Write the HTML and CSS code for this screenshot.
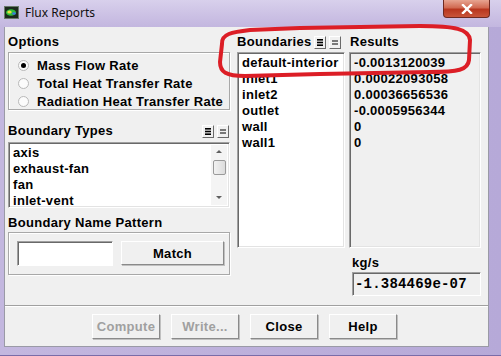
FILE: index.html
```html
<!DOCTYPE html>
<html lang="en">
<head>
  <meta charset="UTF-8">
  <title>Flux Reports</title>
  <link rel="stylesheet" href="styles.css">
</head>
<body>

  <div class="window">

    <!-- Title bar -->
    <div class="titlebar">
      <svg class="app-icon" width="15" height="13" viewBox="0 0 15 13">
        <rect x="0.5" y="0.5" width="14" height="12" fill="#1c2a1c" stroke="#6a7a6a"/>
        <ellipse cx="7" cy="6.5" rx="5" ry="3.2" fill="#2fbf3a"/>
        <ellipse cx="5.5" cy="6" rx="2.2" ry="1.6" fill="#e8e040"/>
        <ellipse cx="10" cy="7.5" rx="1.8" ry="1.3" fill="#3a7ae0"/>
      </svg>
      <span class="title">Flux Reports</span>
      <div class="close-btn">
        <svg width="12" height="10" viewBox="0 0 12 10">
          <path d="M2 1 L10 9 M10 1 L2 9" stroke="#fff" stroke-width="2.4" stroke-linecap="square"/>
        </svg>
      </div>
    </div>

    <div class="frame">
      <div class="client">

        <div class="main">
          <!-- Left column -->
          <div class="left">
            <div class="label">Options</div>
            <div class="group options">
              <div class="radio-row"><span class="radio checked"></span>Mass Flow Rate</div>
              <div class="radio-row"><span class="radio"></span>Total Heat Transfer Rate</div>
              <div class="radio-row"><span class="radio"></span>Radiation Heat Transfer Rate</div>
            </div>

            <div class="label-row types-head">
              <span class="label">Boundary Types</span>
              <span class="tools">
                <span class="tool"><svg width="8" height="9" viewBox="0 0 8 9"><rect x="1" y="1" width="6" height="1.6" fill="#000"/><rect x="1" y="3.7" width="6" height="1.6" fill="#000"/><rect x="1" y="6.4" width="6" height="1.6" fill="#000"/></svg></span>
                <span class="tool"><svg width="8" height="9" viewBox="0 0 8 9"><rect x="1" y="2.5" width="6" height="1" fill="#000"/><rect x="1" y="5.5" width="6" height="1" fill="#000"/></svg></span>
              </span>
            </div>
            <div class="listbox types">
              <div class="items">
                <div class="item">axis</div>
                <div class="item">exhaust-fan</div>
                <div class="item">fan</div>
                <div class="item">inlet-vent</div>
              </div>
              <div class="scrollbar">
                <span class="arrow up"></span>
                <span class="thumb"></span>
                <span class="arrow down"></span>
              </div>
            </div>

            <div class="label pattern-label">Boundary Name Pattern</div>
            <div class="group pattern">
              <div class="field"></div>
              <div class="btn match">Match</div>
            </div>
          </div>

          <!-- Right column -->
          <div class="right">
            <div class="heads">
              <div class="label-row">
                <span class="label">Boundaries</span>
                <span class="tools">
                  <span class="tool"><svg width="8" height="9" viewBox="0 0 8 9"><rect x="1" y="1" width="6" height="1.6" fill="#000"/><rect x="1" y="3.7" width="6" height="1.6" fill="#000"/><rect x="1" y="6.4" width="6" height="1.6" fill="#000"/></svg></span>
                  <span class="tool"><svg width="8" height="9" viewBox="0 0 8 9"><rect x="1" y="2.5" width="6" height="1" fill="#000"/><rect x="1" y="5.5" width="6" height="1" fill="#000"/></svg></span>
                </span>
              </div>
              <div class="label results-label">Results</div>
            </div>
            <div class="lists">
              <div class="listbox names">
                <div class="item">default-interior</div>
                <div class="item">inlet1</div>
                <div class="item">inlet2</div>
                <div class="item">outlet</div>
                <div class="item">wall</div>
                <div class="item">wall1</div>
              </div>
              <div class="listbox results">
                <div class="item">-0.0013120039</div>
                <div class="item">0.00022093058</div>
                <div class="item">0.00036656536</div>
                <div class="item">-0.0005956344</div>
                <div class="item">0</div>
                <div class="item">0</div>
              </div>
            </div>
            <div class="label units">kg/s</div>
            <div class="total">-1.384469e-07</div>
          </div>
        </div>

        <div class="separator"></div>

        <div class="actions">
          <div class="btn disabled">Compute</div>
          <div class="btn disabled">Write...</div>
          <div class="btn">Close</div>
          <div class="btn">Help</div>
        </div>

      </div>
    </div>

    <!-- hand-drawn red mark over the first row -->
    <svg class="mark" width="501" height="356" viewBox="0 0 501 356">
      <path d="M222 44 C221 34 232 32 250 30 L300 28 L420 26 C455 26 469 29 470 40 L469 60 C468 70 458 72 430 72 L320 74 L245 76 C226 76 220 72 220 62 Z"
            fill="none" stroke="#dc1e26" stroke-width="4" stroke-linejoin="round"/>
    </svg>

  </div>

</body>
</html>
```

FILE: styles.css
```css
body {
  margin: 0;
  padding: 0;
  background: #ffffff;
  overflow: hidden;
  font-family: "Liberation Sans", Arial, sans-serif;
  font-size: 13px;
  font-weight: bold;
  letter-spacing: 0.3px;
  color: #000;
}

.window {
  position: relative;
  width: 501px;
  height: 356px;
  display: flex;
  flex-direction: column;
  background: #b7aad8;
}

/* Title bar */
.titlebar {
  height: 27px;
  display: flex;
  align-items: center;
  padding-left: 4px;
  background: linear-gradient(180deg, #d8d0ec 0%, #cbc0e4 60%, #c3b7df 100%);
  position: relative;
}

.app-icon {
  margin-right: 6px;
  margin-top: -2px;
}

.title {
  font-family: "Noto Sans", "DejaVu Sans", sans-serif;
  font-weight: normal;
  font-size: 12px;
  letter-spacing: 0;
  color: #101010;
  margin-top: -2px;
}

.close-btn {
  position: absolute;
  top: 0;
  left: 443px;
  width: 45px;
  height: 17px;
  border: 1px solid #6e2a22;
  border-top: none;
  border-radius: 0 0 4px 4px;
  background: linear-gradient(180deg, #e7a491 0%, #d16a52 45%, #b8361f 55%, #c9553a 100%);
  display: flex;
  align-items: center;
  justify-content: center;
}

/* Frame and client area */
.frame {
  flex: 1;
  padding: 0 12px 8px 4px;
  background: linear-gradient(90deg, #c3b7df 0%, #b6a9d8 100%);
  border-bottom: 1px solid #7a6ca8;
}

.client {
  height: 100%;
  background: #f0f0f0;
  border: 1px solid #9a9aa6;
  border-top: none;
  box-sizing: border-box;
}

.main {
  display: flex;
  gap: 7px;
  padding: 7px 0 0 3px;
  height: 262px;
}

.label {
  height: 16px;
  line-height: 16px;
}

.label-row {
  display: flex;
  justify-content: space-between;
  align-items: center;
  height: 16px;
}

.tools {
  display: flex;
  gap: 3px;
}

.tool {
  width: 10px;
  height: 11px;
  background: #f0f0f0;
  border: 1px solid;
  border-color: #fff #6a6a6a #6a6a6a #fff;
  display: flex;
  align-items: center;
  justify-content: center;
}

/* Left column */
.left {
  width: 222px;
  display: flex;
  flex-direction: column;
}

.group {
  border: 1px solid #a8a8a8;
  box-shadow: inset 1px 1px 0 #fff, 1px 1px 0 #fff;
  box-sizing: border-box;
}

.options {
  margin-top: 2px;
  height: 58px;
  padding-top: 3px;
}

.radio-row {
  height: 18px;
  display: flex;
  align-items: center;
}

.radio {
  width: 9px;
  height: 9px;
  border-radius: 50%;
  border: 1px solid #b8b8b8;
  background: #fbfbfb;
  margin: 0 8px 0 9px;
  position: relative;
}

.radio.checked::after {
  content: "";
  position: absolute;
  left: 2px;
  top: 2px;
  width: 5px;
  height: 5px;
  border-radius: 50%;
  background: #000;
}

.types-head {
  margin-top: 13px;
  padding-right: 1px;
}

.listbox {
  background: #fff;
  border: 1px solid;
  border-color: #a0a0a0 #fff #fff #a0a0a0;
  box-shadow: inset 1px 1px 0 #696969, inset -1px -1px 0 #e3e3e3;
  box-sizing: border-box;
  padding: 2px 2px 0 2px;
  overflow: hidden;
}

.item {
  height: 16px;
  line-height: 16px;
  padding-left: 2px;
  white-space: nowrap;
}

.types {
  margin-top: 3px;
  height: 66px;
  display: flex;
}

.types .items {
  flex: 1;
}

.scrollbar {
  width: 16px;
  background: #f4f4f4;
  display: flex;
  flex-direction: column;
  align-items: center;
  margin-bottom: 2px;
}

.arrow {
  width: 0;
  height: 0;
  border-left: 3px solid transparent;
  border-right: 3px solid transparent;
}

.arrow.up {
  border-bottom: 3px solid #606060;
  margin-top: 5px;
}

.arrow.down {
  border-top: 3px solid #606060;
  margin-top: auto;
  margin-bottom: 6px;
}

.thumb {
  width: 13px;
  height: 15px;
  margin-top: 7px;
  border: 1px solid #9a9a9a;
  border-radius: 2px;
  background: linear-gradient(90deg, #f2f2f2, #dcdcdc);
  box-sizing: border-box;
}

.pattern-label {
  margin-top: 7px;
}

.pattern {
  margin-top: 1px;
  height: 43px;
  display: flex;
  align-items: flex-start;
  padding: 8px 5px 0 8px;
  gap: 8px;
}

.field {
  width: 96px;
  height: 25px;
  background: #fff;
  border: 1px solid;
  border-color: #a0a0a0 #fff #fff #a0a0a0;
  box-shadow: inset 1px 1px 0 #696969;
  box-sizing: border-box;
}

/* Buttons */
.btn {
  height: 25px;
  background: #f0f0f0;
  border: 1px solid;
  border-color: #fff #8a8a8a #8a8a8a #fff;
  box-shadow: 1px 1px 0 #c0c0c0;
  box-sizing: border-box;
  display: flex;
  align-items: center;
  justify-content: center;
}

.btn.disabled {
  color: #a0a0a0;
}

.match {
  width: 103px;
  height: 24px;
}

/* Right column */
.right {
  width: 244px;
  display: flex;
  flex-direction: column;
}

.heads {
  display: grid;
  grid-template-columns: 108px 132px;
  gap: 4px;
}

.heads .label-row {
  padding-right: 4px;
}

.results-label {
  padding-left: 1px;
}

.lists {
  margin-top: 2px;
  display: grid;
  grid-template-columns: 108px 132px;
  gap: 4px;
  height: 196px;
}

.results {
  background: #f0f0f0;
}

.units {
  margin-top: 7px;
  padding-left: 115px;
}

.total {
  margin-top: 1px;
  margin-left: 115px;
  width: 129px;
  height: 24px;
  line-height: 22px;
  box-sizing: border-box;
  padding-left: 2px;
  border: 1px solid;
  border-color: #a0a0a0 #fff #fff #a0a0a0;
  box-shadow: inset 1px 1px 0 #696969;
  font-family: "Liberation Mono", "Courier New", monospace;
  font-size: 14px;
  letter-spacing: 0.2px;
}

/* Bottom bar */
.separator {
  margin-top: 9px;
  height: 1px;
  background: #a0a0a0;
  border-bottom: 1px solid #fff;
}

.actions {
  margin-top: 7px;
  display: flex;
  justify-content: center;
  gap: 11px;
  padding-right: 4px;
}

.actions .btn {
  width: 68px;
}

.mark {
  position: absolute;
  left: 0;
  top: 0;
  pointer-events: none;
}
```
